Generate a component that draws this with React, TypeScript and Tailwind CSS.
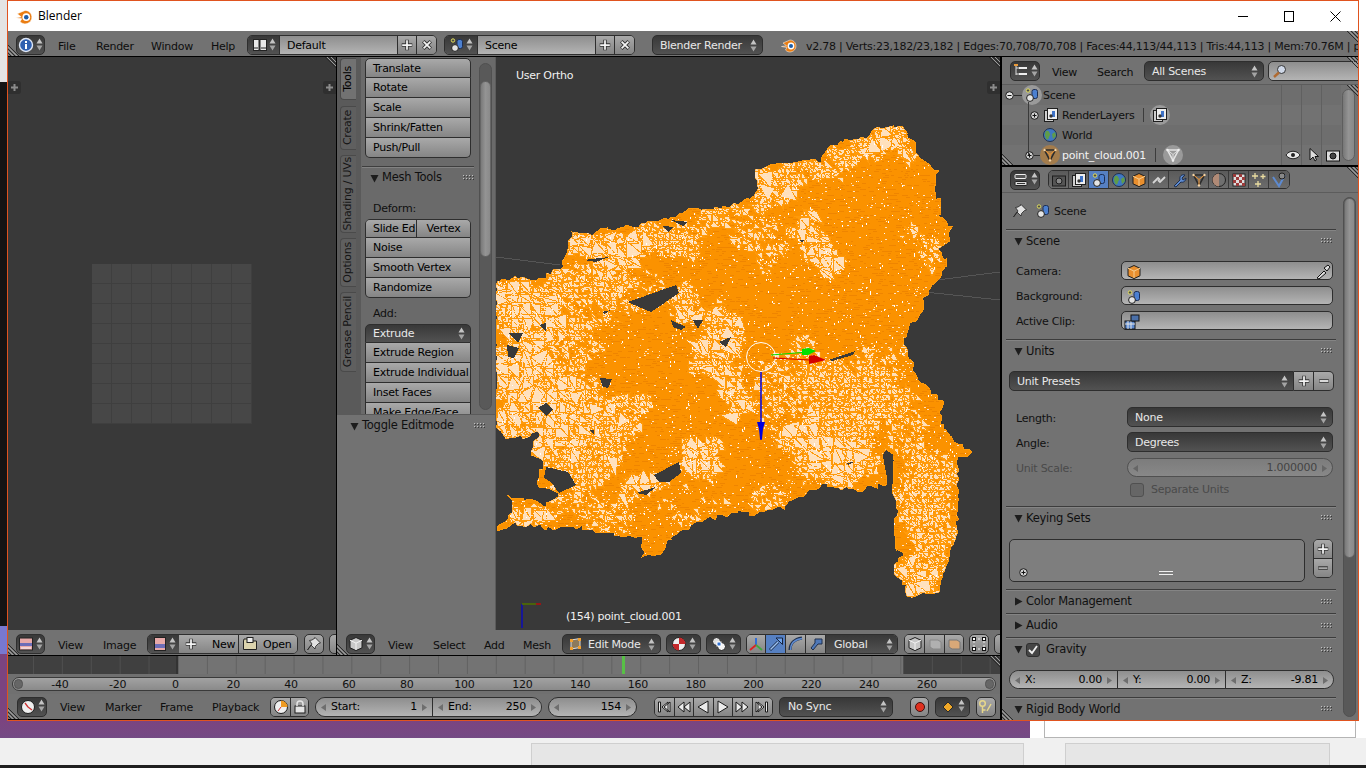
import { useMemo, type ReactNode } from "react";

// shared widget skins
const lightBg = "bg-linear-to-b from-[#a9a9a9] to-[#858585] text-black";
const darkBg = "bg-linear-to-b from-[#383838] to-[#525252] text-[#e8e8e8]";
const darkBtn = `${darkBg} pt-[2px]`;
const fieldBg = "bg-linear-to-b from-[#8e8e8e] to-[#b4b4b4] text-black pt-[2px]";
const edge = "border border-[#2e2e2e]";

type Pt = [number, number];

const OUTLINE: Pt[] = [
  [496, 282], [520, 278], [540, 280], [548, 275], [563, 267], [566, 247], [573, 234], [593, 235], [601, 230], [623, 228],
  [649, 222], [673, 218], [688, 210], [716, 209], [736, 205], [756, 195], [758, 187], [755, 173], [765, 167], [790, 162],
  [820, 160], [825, 150], [847, 140], [868, 137], [870, 130], [883, 127], [903, 128], [915, 143], [918, 158], [937, 172],
  [935, 195], [939, 200], [938, 217], [952, 228], [947, 243], [937, 248], [947, 265], [937, 280], [922, 302], [923, 310],
  [907, 328], [905, 340], [907, 353], [915, 373], [927, 387], [943, 403], [938, 423], [950, 437], [970, 453], [958, 457],
  [957, 470], [958, 483], [957, 510], [958, 532], [948, 557], [940, 590], [923, 592], [910, 598], [903, 583], [892, 570],
  [905, 550], [895, 550], [893, 530], [898, 510], [893, 490], [892, 483], [893, 453], [883, 447], [887, 483], [857, 490],
  [837, 488], [825, 482], [807, 493], [783, 507], [750, 515], [743, 510], [729, 515], [703, 520], [666, 540], [664, 553],
  [643, 555], [643, 538], [609, 533], [576, 527], [546, 528], [519, 523], [496, 530], [503, 522], [513, 513], [508, 497],
  [529, 500], [546, 507], [558, 493], [536, 483], [544, 460], [529, 453], [539, 432], [524, 437], [508, 437], [496, 427],
];

const HOLES: Pt[][] = [
  [[628, 302], [676, 285], [679, 293], [651, 312], [639, 307]],
  [[584, 260], [609, 257], [596, 262]],
  [[671, 220], [688, 222], [683, 226]],
  [[663, 226], [674, 227], [668, 232]],
  [[508, 333], [523, 333], [518, 343]],
  [[507, 345], [519, 348], [514, 358], [508, 357]],
  [[539, 325], [546, 323], [546, 332]],
  [[671, 320], [686, 327], [681, 330], [673, 327]],
  [[693, 320], [703, 320], [698, 329]],
  [[719, 342], [731, 337], [726, 347]],
  [[602, 312], [611, 310], [604, 314]],
  [[538, 408], [546, 403], [553, 410], [546, 416]],
  [[600, 378], [612, 379], [608, 388], [603, 387]],
  [[654, 475], [679, 462], [681, 473], [669, 482], [659, 482]],
  [[636, 493], [656, 487], [646, 495]],
  [[546, 467], [568, 472], [576, 485], [559, 493], [551, 482], [544, 478]],
  [[829, 360], [855, 351], [853, 355], [832, 361]],
  [[590, 430], [594, 430], [594, 435]],
  [[846, 463], [854, 462], [848, 465]],
  [[800, 240], [804, 240], [802, 243]],
];

const LIGHT: [number, number, number, number, number][] = [
  [610, 248, 52, 20, 0.95], [670, 238, 32, 14, 0.8], [712, 222, 30, 12, 0.6], [770, 182, 32, 20, 0.9], [805, 170, 32, 10, 0.75],
  [860, 147, 30, 13, 0.8], [888, 145, 30, 18, 0.9], [815, 250, 18, 33, 0.98], [530, 320, 38, 45, 0.98],
  [530, 395, 40, 55, 0.98], [590, 285, 50, 18, 0.7], [715, 335, 22, 28, 0.95], [690, 300, 14, 24, 0.85],
  [610, 425, 30, 34, 0.9], [565, 425, 30, 50, 0.95], [640, 490, 22, 9, 1], [700, 457, 24, 22, 0.95],
  [730, 385, 15, 42, 0.95], [530, 512, 26, 11, 1], [575, 475, 28, 28, 0.8], [830, 450, 47, 35, 0.98],
  [850, 400, 55, 50, 0.72], [800, 385, 50, 42, 0.52], [925, 500, 32, 55, 0.68], [925, 572, 21, 24, 0.95],
  [915, 440, 22, 34, 0.6], [900, 360, 16, 28, 0.5], [600, 510, 45, 18, 0.55], [925, 240, 12, 24, 0.55],
  [760, 235, 30, 28, 0.5], [560, 300, 48, 24, 0.55], [650, 300, 60, 20, 0.42], [570, 370, 30, 60, 0.6],
  [840, 310, 50, 30, 0.2], [700, 510, 35, 10, 0.45], [780, 490, 30, 18, 0.45],
];

function rng(seed: number) {
  let a = seed;
  return () => {
    a = (a + 0x6d2b79f5) | 0;
    let t = Math.imul(a ^ (a >>> 15), 1 | a);
    t = (t + Math.imul(t ^ (t >>> 7), 61 | t)) ^ t;
    return ((t ^ (t >>> 14)) >>> 0) / 4294967296;
  };
}

function density(x: number, y: number) {
  let d = 0.12;
  // wobble so patches don't read as clean ellipses
  const px = x + 9 * Math.sin(y * 0.09) + 5 * Math.cos(y * 0.21 + x * 0.05);
  const py = y + 9 * Math.sin(x * 0.08) + 5 * Math.cos(x * 0.19 - y * 0.04);
  for (const [cx, cy, rx, ry, w] of LIGHT) {
    const q = ((px - cx) / rx) ** 2 + ((py - cy) / ry) ** 2;
    if (q < 1.5) d = Math.max(d, w * (q < 0.7 ? 1 : (1.5 - q) / 0.8));
  }
  return d;
}

function buildMesh() {
  const r = rng(154);
  const tris = (cell: number, test: (d: number) => boolean) => {
    let out = "";
    for (let x = 496; x < 975; x += cell) {
      for (let y = 125; y < 600; y += cell) {
        const j = () => (r() - 0.5) * cell * 0.7;
        const p: Pt[] = [
          [x + j(), y + j()], [x + cell + j(), y + j()], [x + cell + j(), y + cell + j()], [x + j(), y + cell + j()],
        ];
        for (const t of [[p[0], p[1], p[2]], [p[0], p[2], p[3]]]) {
          const d = density((t[0][0] + t[1][0] + t[2][0]) / 3, (t[0][1] + t[1][1] + t[2][1]) / 3);
          if (test(d)) out += `M${t[0][0].toFixed(0)} ${t[0][1].toFixed(0)}L${t[1][0].toFixed(0)} ${t[1][1].toFixed(0)}L${t[2][0].toFixed(0)} ${t[2][1].toFixed(0)}Z`;
        }
      }
    }
    return out;
  };
  const medium = tris(6, (d) => d > 0.3 + r() * 0.42);
  const coarse = tris(12, (d) => d > 0.82 + r() * 0.18);
  let specks = "";
  let whites = "";
  let dashes = "";
  for (let x = 496; x < 975; x += 2) {
    for (let y = 125; y < 600; y += 2) {
      const d = density(x, y);
      if (r() < d * 0.3) specks += `M${x} ${y}h${1 + Math.floor(r() * 4)}v1h-${1}z`;
      if (r() < 0.02) whites += `M${x} ${y}h1v${1 + Math.floor(r() * 2)}h-1z`;
      if (r() < 0.13) dashes += `M${x} ${y}h${2 + Math.floor(r() * 9)}v1h-${2}z`;
    }
  }
  let edgeLine = "";
  OUTLINE.forEach((p, i) => {
    const q = OUTLINE[(i + 1) % OUTLINE.length];
    const n = Math.max(1, Math.round(Math.hypot(q[0] - p[0], q[1] - p[1]) / 4));
    for (let k = 0; k < n; k++) {
      const f = k / n;
      edgeLine += `${i || k ? "L" : "M"}${(p[0] + (q[0] - p[0]) * f + (r() - 0.5) * 5).toFixed(0)} ${(p[1] + (q[1] - p[1]) * f + (r() - 0.5) * 5).toFixed(0)}`;
    }
  });
  return { coarse, medium, specks, whites, dashes, edgeLine: edgeLine + "Z" };
}

function MeshCanvas() {
  const m = useMemo(buildMesh, []);
  return (
    <svg className="block w-[504px] h-[573px]" viewBox="496 57 504 573" shapeRendering="crispEdges">
      <path d="M496 257L560 265M937 280L1000 272M925 292L1000 300" stroke="#555" fill="none" />
      <clipPath id="cloud"><path d={m.edgeLine} /></clipPath>
      <path d={m.edgeLine} fill="#fb9200" stroke="#ff9a0a" />
      <g clipPath="url(#cloud)">
        <path d={m.dashes} fill="#ef8500" />
        <path d={m.medium} fill="#ffdfb8" stroke="#ff9a0a" />
        <path d={m.coarse} fill="#ffe0bc" stroke="#ff9a0a" />
        <path d={m.specks} fill="#ffe4c4" />
        <path d={m.whites} fill="#ffffff" />
      </g>
      {HOLES.map((h, i) => (
        <polygon key={i} points={h.map((p) => p.join(",")).join(" ")} fill="#393939" />
      ))}
      <g shapeRendering="auto">
        <circle cx="761" cy="357" r="14.5" fill="none" stroke="#fff" />
        <path d="M761 372V440" stroke="#0000e0" strokeWidth="1.5" />
        <path d="M757 422h8l-2 7-1 10h-2l-1-10z" fill="#0000e0" />
        <path d="M771 355L808 352" stroke="#00e000" strokeWidth="1" />
        <path d="M802 349l7-1 7 3-8 4h-6z" fill="#00e000" />
        <path d="M773 358L810 360" stroke="#d40000" strokeWidth="1" />
        <path d="M809 356l5-1 12 5-12 3-5 1z" fill="#d40000" />
        <path d="M522 628V604" stroke="#0000d8" strokeWidth="1.2" />
        <path d="M522 604H541" stroke="#d40000" strokeWidth="1.2" />
        <path d="M522 604H536" stroke="#00b000" strokeWidth="1" />
      </g>
    </svg>
  );
}

function Svg({ children, size = 16, className = "" }: { children: ReactNode; size?: number; className?: string }) {
  return (
    <svg width={size} height={size} viewBox="0 0 16 16" className={`block shrink-0 ${className}`}>
      {children}
    </svg>
  );
}

const Arrows = ({ dim }: { dim?: boolean }) => (
  <svg width="7" height="13" viewBox="0 0 7 13" className="block shrink-0 -mt-[2px]">
    <path d="M3.5 0.5L6.5 5.5H0.5z" fill={dim ? "#5a5a5a" : "#c4c4c4"} />
    <path d="M3.5 12.5L6.5 7.5H0.5z" fill={dim ? "#5a5a5a" : "#a4a4a4"} />
  </svg>
);

// the small nudge triangles at both ends of a number field
const Nudge = ({ dim }: { dim?: boolean }) => (
  <>
    <svg width="5" height="7" viewBox="0 0 5 7" className="absolute left-[5px] top-[6px]">
      <path d="M5 0V7L0 3.500z" fill={dim ? "#666" : "#6e6e6e"} />
    </svg>
    <svg width="5" height="7" viewBox="0 0 5 7" className="absolute right-[5px] top-[6px]">
      <path d="M0 0V7L5 3.500z" fill={dim ? "#666" : "#6e6e6e"} />
    </svg>
  </>
);

const BlenderLogo = ({ size = 16 }: { size?: number }) => (
  <Svg size={size}>
    <path d="M0.500 9.500L5.500 8.800L2 6L9 3A6 6 0 1 1 4.500 13L6 10.500z" fill="#ea7d12" stroke="#fff" strokeWidth="0.5" />
    <circle cx="10" cy="9" r="3.400" fill="#fff" />
    <circle cx="10" cy="9" r="2" fill="#1d5da8" />
  </Svg>
);

const InfoIcon = () => (
  <Svg>
    <circle cx="8" cy="8" r="6.500" fill="#2e5fb0" stroke="#dfe7f5" strokeWidth="1.400" />
    <rect x="7" y="7" width="2" height="5" fill="#fff" />
    <rect x="7" y="4" width="2" height="2" fill="#fff" />
  </Svg>
);

const LayoutIcon = () => (
  <Svg>
    <rect x="1.500" y="2.500" width="5.500" height="11" fill="#e8e8e8" stroke="#222" />
    <rect x="8" y="2.500" width="6.500" height="11" fill="#e8e8e8" stroke="#222" />
    <path d="M2 11h4M9 11h5" stroke="#222" />
  </Svg>
);

const SceneIcon = () => (
  <Svg>
    <rect x="8" y="2.500" width="5.500" height="9" rx="2" fill="#4c80d0" stroke="#1d2f55" />
    <circle cx="6" cy="11" r="3.400" fill="#e4e4e4" stroke="#1f1f1f" />
    <circle cx="4" cy="3.500" r="1.700" fill="#4a4a4a" stroke="#e3e05c" />
  </Svg>
);

const CrossIcon = ({ rotate, minus, dim }: { rotate?: boolean; minus?: boolean; dim?: boolean }) => (
  <Svg size={14} className={rotate ? "rotate-45" : ""}>
    {minus ? (
      <>
        <path d="M2.500 8H13.500" stroke="#333" strokeWidth="4" />
        <path d="M3 8H13" stroke={dim ? "#a9a9a9" : "#f2f2f2"} strokeWidth="2" />
      </>
    ) : (
      <>
        <path d="M8 2V14M2 8H14" stroke="#333" strokeWidth="4" />
        <path d="M8 2.500V13.500M2.500 8H13.500" stroke="#f4f4f4" strokeWidth="2" />
      </>
    )}
  </Svg>
);

const PinIcon = () => (
  <Svg>
    <path d="M9 1.500l5.500 5.500-2 .5-3 3-.5 2.500L5 9l-3.500 5L6 8 3.500 4.500 6 4l3-2z" fill="#e2e2e2" stroke="#222" strokeWidth="0.8" />
  </Svg>
);

const OutlinerIcon = () => (
  <Svg>
    <path d="M3 2v10M3 5h3M3 11h3" stroke="#ddd" />
    <rect x="1" y="1" width="4" height="2" fill="#e89a3a" />
    <rect x="6" y="4" width="8" height="2" fill="#eee" />
    <rect x="6" y="10" width="8" height="2" fill="#eee" />
  </Svg>
);

const PropsIcon = () => (
  <Svg>
    <rect x="2" y="2.500" width="11" height="4" rx="1" fill="#555" stroke="#eee" />
    <rect x="2" y="9.500" width="12" height="4" rx="1" fill="#ddd" stroke="#222" />
    <path d="M4 11.500h8" stroke="#333" />
  </Svg>
);

const CubeIcon = ({ orange }: { orange?: boolean }) => (
  <Svg>
    <path d="M8 1.500l6 2.800v7.500l-6 2.800-6-2.800V4.300z" fill={orange ? "#e98f2e" : "#c8c8c8"} stroke="#1f1f1f" />
    <path d="M2 4.300l6 2.800 6-2.800M8 7v7" stroke={orange ? "#f7cd8e" : "#f2f2f2"} fill="none" />
  </Svg>
);

const TriMeshIcon = ({ dim }: { dim?: boolean }) => (
  <Svg>
    <path d="M2.500 3H13.500L8 13.500z" fill="none" stroke={dim ? "#e4e4e4" : "#2b2b2b"} strokeWidth="1.600" />
    <path d="M2.500 3L8 7.500 13.500 3M8 7.500V13.500" stroke={dim ? "#dedede" : "#f09532"} fill="none" />
    <g fill={dim ? "#f0f0f0" : "#f6d6a8"}>
      <circle cx="2.500" cy="3" r="1.200" />
      <circle cx="13.500" cy="3" r="1.200" />
      <circle cx="8" cy="13.500" r="1.200" />
    </g>
  </Svg>
);

const ExpandDot = ({ minus }: { minus?: boolean }) => (
  <svg width="9" height="9" viewBox="0 0 9 9" className="block shrink-0">
    <circle cx="4.500" cy="4.500" r="3.800" fill={minus ? "#e4e4e4" : "#d0d0d0"} stroke="#1c1c1c" />
    <path d={minus ? "M2.500 4.500h4" : "M2.500 4.500h4M4.500 2.500v4"} stroke="#111" />
  </svg>
);

const RenderLayersIcon = () => (
  <Svg>
    <rect x="1.500" y="3.500" width="9" height="11" fill="#cfcfcf" stroke="#1f1f1f" />
    <rect x="4.500" y="1.500" width="10" height="11" fill="#eeeeee" stroke="#1f1f1f" />
    <rect x="9" y="4" width="3" height="6" fill="#3e73c8" />
    <circle cx="8" cy="9" r="1.700" fill="#333" />
  </Svg>
);

const WorldIcon = () => (
  <Svg>
    <circle cx="8" cy="8" r="6.500" fill="#3f78c2" stroke="#20314f" />
    <path d="M4 4c3-1 3 1 4 3s-2 2-1 4l-2 2c-2-3-3-6-1-9zM10 7l3-2 1 4-3 3z" fill="#5f9c4a" />
  </Svg>
);

const HalfCircleBadge = ({ children }: { children: ReactNode }) => (
  <span className="flex items-center justify-center w-[20px] h-[20px] rounded-full bg-[#9a9a9a] shrink-0">{children}</span>
);

const Diagonal = ({ flip }: { flip?: boolean }) => (
  <svg width="13" height="13" viewBox="0 0 13 13" className={`absolute ${flip ? "right-0 top-0" : "left-0 bottom-0"}`}>
    <path d={flip ? "M2 0L13 11M6 0L13 7M10 0L13 3" : "M0 2L11 13M0 6L7 13M0 10L3 13"} stroke="#2a2a2a" fill="none" />
    <path d={flip ? "M4 0L13 9M8 0L13 5" : "M0 4L9 13M0 8L5 13"} stroke="#9c9c9c" fill="none" />
  </svg>
);

const Grip = () => (
  <svg width="11" height="6" viewBox="0 0 11 6" className="block shrink-0">
    <g fill="#c2c2c2">
      {[0, 3, 6, 9].map((x) => (
        <g key={x}>
          <rect x={x} y="0" width="1" height="1" />
          <rect x={x} y="3" width="1" height="1" />
        </g>
      ))}
    </g>
    <g fill="#393939">
      {[1, 4, 7, 10].map((x) => (
        <g key={x}>
          <rect x={x} y="1" width="1" height="1" />
          <rect x={x} y="4" width="1" height="1" />
        </g>
      ))}
    </g>
  </svg>
);

const Tri = ({ open = true }: { open?: boolean }) => (
  <svg width="9" height="9" viewBox="0 0 9 9" className="block shrink-0">
    <path d={open ? "M0.500 1H8.500L4.500 8.500z" : "M1 0.500V8.500L8.500 4.500z"} fill="#1d1d1d" />
  </svg>
);

function PanelHead({ label, open = true, h = "h-[22px]", children }: { label: string; open?: boolean; h?: string; children?: ReactNode }) {
  return (
    <div className={`${h} flex items-center pl-[12px] pr-[8px] text-[11.5px] text-[#101010]`}>
      <Tri open={open} />
      <span className="ml-[3px] flex items-center gap-[6px] pt-[1px]">
        {children}
        {label}
      </span>
      <span className="ml-auto">
        <Grip />
      </span>
    </div>
  );
}

const Rule = () => <div className="mx-[4px] h-[1px] bg-[#3c3c3c] shadow-[0_1px_0_#848484]" />;

function Dropdown({ icon, w, h = "h-[20px]" }: { icon: ReactNode; w: string; h?: string }) {
  return (
    <div className={`${w} ${h} ${edge} ${darkBg} rounded-[5px] flex items-center justify-center gap-[2px] shrink-0`}>
      {icon}
      <Arrows />
    </div>
  );
}

function Cell({ label, w }: { label: string; w: string }) {
  return <span className={`${w} shrink-0 pt-[4px] text-[11px] text-[#0d0d0d]`}>{label}</span>;
}

function IconBtn({ children, className = "" }: { children: ReactNode; className?: string }) {
  return <div className={`flex items-center justify-center ${lightBg} ${className}`}>{children}</div>;
}

function ToolRow({ label, first, last }: { label: string; first?: boolean; last?: boolean }) {
  return (
    <div
      className={`h-[20px] flex items-center pl-[7px] pt-[2px] text-[11px] border-x border-b border-[#2e2e2e] ${lightBg} ${first ? "border-t rounded-t-[5px] h-[19px]" : ""} ${last ? "rounded-b-[5px]" : ""}`}
    >
      {label}
    </div>
  );
}

function VTab({ label, h, active, mt }: { label: string; h: string; active?: boolean; mt: string }) {
  return (
    <div className={`${h} ${mt} ml-[3px] w-[16px] rounded-l-[4px] border-l border-y border-[#4a4a4a] flex items-center justify-center ${active ? "bg-[#727272]" : "bg-[#5f5f5f]"}`}>
      <span className={`[writing-mode:vertical-rl] rotate-180 text-[11px] ${active ? "text-black" : "text-[#151515]"}`}>{label}</span>
    </div>
  );
}

function ToolShelf() {
  return (
    <div className="w-[159px] shrink-0 flex flex-col bg-[#6a6a6a] border-r border-[#5c5c5c]">
      <div className="h-[357px] flex overflow-hidden">
        <div className="w-[24px] shrink-0 pt-[1px] bg-[#5a5a5a]">
          <VTab label="Tools" h="h-[42px]" mt="" active />
          <VTab label="Create" h="h-[44px]" mt="mt-[6px]" />
          <VTab label="Shading / UVs" h="h-[78px]" mt="mt-[5px]" />
          <VTab label="Options" h="h-[49px]" mt="mt-[5px]" />
          <VTab label="Grease Pencil" h="h-[80px]" mt="mt-[5px]" />
        </div>
        <div className="w-[106px] ml-[4px] shrink-0 pt-[1px]">
          <ToolRow label="Translate" first />
          <ToolRow label="Rotate" />
          <ToolRow label="Scale" />
          <ToolRow label="Shrink/Fatten" />
          <ToolRow label="Push/Pull" last />
          <div className="mt-[8px] -mx-[3px] h-[1px] bg-[#3e3e3e] shadow-[0_1px_0_#828282]" />
          <div className="h-[22px] flex items-center pl-[5px] text-[11.5px] text-[#101010]">
            <Tri />
            <span className="ml-[3px]">Mesh Tools</span>
            <span className="ml-auto -mr-[3px]">
              <Grip />
            </span>
          </div>
          <div className="mt-[10px] h-[20px] flex items-center pl-[8px] text-[11px] text-[#101010]">Deform:</div>
          <div className="h-[19px] flex text-[11px] border border-[#2e2e2e] rounded-t-[5px] overflow-hidden">
            <div className={`w-[51px] flex items-center pl-[7px] pt-[2px] border-r border-[#2e2e2e] ${lightBg}`}>Slide Ed</div>
            <div className={`flex-1 flex items-center justify-center pt-[2px] ${lightBg}`}>Vertex</div>
          </div>
          <ToolRow label="Noise" />
          <ToolRow label="Smooth Vertex" />
          <ToolRow label="Randomize" last />
          <div className="mt-[6px] h-[20px] flex items-center pl-[8px] text-[11px] text-[#101010]">Add:</div>
          <div className={`h-[19px] flex items-center pl-[7px] pr-[5px] text-[11px] border border-[#2e2e2e] rounded-t-[5px] ${darkBtn}`}>
            Extrude
            <span className="ml-auto">
              <Arrows />
            </span>
          </div>
          <ToolRow label="Extrude Region" />
          <ToolRow label="Extrude Individual" />
          <ToolRow label="Inset Faces" />
          <ToolRow label="Make Edge/Face" />
        </div>
        <div className="ml-[8px] mt-[6px] mb-[4px] w-[13px] rounded-full bg-[#595959] border border-[#505050] overflow-hidden shrink-0">
          <div className="mt-[17px] h-[176px] rounded-full bg-linear-to-r from-[#7a7a7a] via-[#949494] to-[#8a8a8a] border border-[#666]" />
        </div>
      </div>
      <div className="flex-1 bg-[#727272] border-t border-[#5a5a5a]">
        <div className="h-[22px] flex items-center pl-[13px] pr-[10px] text-[11.5px] text-[#101010]">
          <Tri />
          <span className="ml-[3px]">Toggle Editmode</span>
          <span className="ml-auto">
            <Grip />
          </span>
        </div>
      </div>
    </div>
  );
}

function CornerPlus({ right }: { right?: boolean }) {
  return (
    <div className={`absolute top-[24px] ${right ? "right-0 rounded-l-[3px]" : "left-0 rounded-r-[3px]"} w-[13px] h-[13px] bg-[#2f2f2f] flex items-center justify-center`}>
      <svg width="9" height="9" viewBox="0 0 9 9"><path d="M4.500 1V8M1 4.500H8" stroke="#8c8c8c" strokeWidth="2" /></svg>
    </div>
  );
}

function ImageEditor() {
  const cells = Array.from({ length: 64 });
  return (
    <div className="w-[328px] shrink-0 flex flex-col">
      <div className="relative h-[573px] bg-[#393939] flex items-center justify-center">
        <div className="grid grid-cols-[repeat(8,20px)] grid-rows-[repeat(8,20px)] mt-[1px]">
          {cells.map((_, i) => (
            <div key={i} className="bg-[#474747] border-r border-b border-[#3f3f3f]" />
          ))}
        </div>
        <CornerPlus />
        <CornerPlus right />
        <Diagonal flip />
      </div>
      <div className="relative h-[25px] bg-[#727272] flex items-center pl-[8px] pt-[3px] overflow-hidden">
        <Dropdown w="w-[29px]" icon={<Svg><rect x="1.500" y="2" width="13" height="12" fill="#e8a9a9" stroke="#222" /><rect x="2" y="7" width="12" height="3" fill="#6d6db8" /><path d="M3 12h10" stroke="#fff" /></Svg>} />
        <div className="ml-[13px] flex items-center">
          <Cell label="View" w="w-[45px]" />
          <Cell label="Image" w="w-[44px]" />
        </div>
        <div className={`h-[20px] w-[151px] ${edge} rounded-[5px] flex overflow-hidden shrink-0`}>
          <div className={`w-[31px] ${darkBg} flex items-center justify-center gap-[1px]`}>
            <Svg><rect x="2.500" y="1.500" width="11" height="13" fill="#e8a9a9" stroke="#222" /><rect x="3" y="8" width="10" height="4" fill="#6d6db8" /></Svg>
            <Arrows />
          </div>
          <div className={`w-[60px] ${lightBg} border-r border-[#2e2e2e] flex items-center text-[11px]`}>
            <span className="ml-[5px]"><CrossIcon /></span>
            <span className="ml-[14px] pt-[2px]">New</span>
          </div>
          <div className={`flex-1 ${lightBg} flex items-center text-[11px]`}>
            <Svg className="ml-[3px]"><path d="M1.500 5V13.500H14.500V5H7L6 3H2z" fill="#dcd4ae" stroke="#222" /><rect x="5" y="1.500" width="6" height="5" fill="#eee" stroke="#222" /></Svg>
            <span className="ml-[5px] pt-[2px]">Open</span>
          </div>
        </div>
        <IconBtn className={`ml-[6px] w-[20px] h-[20px] rounded-[5px] ${edge} shrink-0`}><PinIcon /></IconBtn>
        <div className={`ml-[5px] w-[20px] h-[20px] rounded-[5px] ${edge} ${lightBg} shrink-0`} />
        <Diagonal />
      </div>
    </div>
  );
}

function ViewHeader() {
  return (
    <div className="relative h-[25px] bg-[#727272] flex items-center pl-[9px] pt-[3px] overflow-hidden">
      <Dropdown w="w-[29px]" icon={<CubeIcon />} />
      <div className="ml-[13px] flex items-center">
        <Cell label="View" w="w-[45px]" />
        <Cell label="Select" w="w-[51px]" />
        <Cell label="Add" w="w-[39px]" />
        <Cell label="Mesh" w="w-[39px]" />
      </div>
      <div className={`w-[99px] h-[20px] ${edge} ${darkBtn} rounded-[5px] flex items-center pl-[5px] pr-[5px] text-[11px] shrink-0`}>
        <Svg className="-mt-[2px]"><path d="M3 4l9-1.500v9L3 13z" fill="#8c7a5c" stroke="#ddd" /><g fill="#f0a030"><rect x="2" y="3" width="3" height="3" /><rect x="10" y="2" width="3" height="3" /><rect x="2" y="11" width="3" height="3" /><rect x="10" y="10" width="3" height="3" /></g></Svg>
        <span className="ml-[4px]">Edit Mode</span>
        <span className="ml-auto"><Arrows /></span>
      </div>
      <div className="ml-[5px]">
        <Dropdown w="w-[35px]" icon={<Svg><circle cx="8" cy="8" r="6.500" fill="#eee" stroke="#222" /><path d="M8 1.500a6.500 6.500 0 0 1 6.500 6.500H8V14.500A6.500 6.500 0 0 1 1.500 8H8z" fill="#c4282a" /></Svg>} />
      </div>
      <div className="ml-[5px]">
        <Dropdown w="w-[35px]" icon={<Svg><circle cx="5.500" cy="5.500" r="4" fill="#e0e0e0" stroke="#222" /><circle cx="10.500" cy="10.500" r="4" fill="#f4f4f4" stroke="#222" /><rect x="6" y="6" width="4" height="4" fill="#2e6fd0" stroke="#fff" /></Svg>} />
      </div>
      <div className={`ml-[5px] w-[152px] h-[20px] ${edge} rounded-[5px] flex overflow-hidden shrink-0`}>
        <IconBtn className="w-[19px] border-r border-[#2e2e2e]">
          <Svg><path d="M8 9V2" stroke="#2468e0" strokeWidth="1.800" /><path d="M8 9L2 14" stroke="#d22" strokeWidth="1.800" /><path d="M8 9L14 14" stroke="#3fa83f" strokeWidth="1.800" /></Svg>
        </IconBtn>
        <div className="w-[20px] bg-[#5680c2] border-r border-[#2e2e2e] flex items-center justify-center">
          <Svg><path d="M2 14L10 6" stroke="#1e2e4c" strokeWidth="3" /><path d="M8 2h6.500v6.500L12 6z" fill="#6fa4ec" stroke="#16233d" /><path d="M2.500 13.500L10 6" stroke="#9cc2f2" strokeWidth="1.400" /></Svg>
        </div>
        <IconBtn className="w-[20px] border-r border-[#2e2e2e] from-[#7d7d7d] to-[#6b6b6b]">
          <Svg><path d="M2 14C2 8 6 3 14 2" fill="none" stroke="#20304c" strokeWidth="3" /><path d="M2.500 14C2.500 8 6.500 3.500 14 2.500" fill="none" stroke="#5d8ad0" strokeWidth="1.400" /></Svg>
        </IconBtn>
        <IconBtn className="w-[20px] border-r border-[#2e2e2e] from-[#7d7d7d] to-[#6b6b6b]">
          <Svg><path d="M7 3h7v5H10l-5 6-2-2 4-5z" fill="#4f78b8" stroke="#1f2f4d" /></Svg>
        </IconBtn>
        <div className={`flex-1 ${darkBtn} flex items-center pl-[8px] pr-[4px] text-[11px]`}>
          Global
          <span className="ml-auto"><Arrows /></span>
        </div>
      </div>
      <div className={`ml-[6px] w-[60px] h-[20px] ${edge} rounded-[5px] flex overflow-hidden shrink-0`}>
        <IconBtn className="w-[20px] border-r border-[#2e2e2e] from-[#7a7a7a] to-[#6a6a6a]"><CubeIcon /></IconBtn>
        <IconBtn className="w-[20px] border-r border-[#2e2e2e]"><Svg><path d="M3 4h8l3 2v7H6l-3-2z" fill="#b0b0b0" stroke="#888" /></Svg></IconBtn>
        <IconBtn className="flex-1"><Svg><path d="M3 4h8l3 2v7H6l-3-2z" fill="#d8a878" stroke="#777" /></Svg></IconBtn>
      </div>
      <IconBtn className={`ml-[5px] w-[20px] h-[20px] rounded-[5px] ${edge} shrink-0 from-[#7a7a7a] to-[#6a6a6a]`}>
        <Svg><path d="M3 3h10v10H3z" fill="none" stroke="#eee" strokeDasharray="2 2" /><g fill="#fff" stroke="#111"><rect x="1.500" y="1.500" width="3" height="3" /><rect x="11.500" y="1.500" width="3" height="3" /><rect x="1.500" y="11.500" width="3" height="3" /><rect x="11.500" y="11.500" width="3" height="3" /></g></Svg>
      </IconBtn>
      <div className={`ml-[5px] w-[20px] h-[20px] rounded-[5px] ${edge} ${lightBg} shrink-0`} />
      <Diagonal />
    </div>
  );
}

function Viewport3D() {
  return (
    <div className="flex-1 flex flex-col min-w-0">
      <div className="h-[573px] flex">
        <ToolShelf />
        <div className="relative flex-1 bg-[#393939] overflow-hidden">
          <MeshCanvas />
          <span className="absolute left-[20px] top-[11px] text-[11px] text-[#f0f0f0]">User Ortho</span>
          <span className="absolute left-[70px] top-[552px] text-[11px] text-[#f0f0f0]">(154) point_cloud.001</span>
          <CornerPlus right />
          <Diagonal flip />
        </div>
      </div>
      <ViewHeader />
    </div>
  );
}

function PlayBtn({ d, last }: { d: string; last?: boolean }) {
  return (
    <IconBtn className={`w-[20px] ${last ? "" : "border-r border-[#2e2e2e]"}`}>
      <Svg><path d={d} fill="#ececec" stroke="#1b1b1b" /></Svg>
    </IconBtn>
  );
}

function Timeline() {
  const labels = ["-40", "-20", "0", "20", "40", "60", "80", "100", "120", "140", "160", "180", "200", "220", "240", "260"];
  return (
    <div className="h-[64px] border-t border-black flex flex-col">
      <div className="h-[18px] flex">
        <div className="w-[170px] bg-[#404040] border-r-2 border-[#333] bg-[linear-gradient(90deg,#4f4f4f_1px,transparent_1px)] bg-[size:28.9px_100%] bg-[position:25px_0]" />
        <div className="w-[725px] relative bg-[#737373] bg-[linear-gradient(90deg,#616161_1px,transparent_1px)] bg-[size:28.9px_100%]">
          <div className="absolute left-[444px] top-0 bottom-0 w-[3px] bg-[#58c046]" />
        </div>
        <div className="relative flex-1 bg-[#404040] bg-[linear-gradient(90deg,#4f4f4f_1px,transparent_1px)] bg-[size:28.9px_100%]">
          <Diagonal flip />
        </div>
      </div>
      <div className="h-[20px] bg-[#707070] px-[4px] flex items-center">
        <div className="relative w-[984px] h-[14px] rounded-full border border-[#3a3a3a] bg-linear-to-b from-[#a2a2a2] to-[#8a8a8a] flex items-center pl-[18px] pt-[2px] text-[11px] overflow-hidden text-[#111]">
          {labels.map((l) => (
            <span key={l} className="w-[57.8px] shrink-0 text-center">{l}</span>
          ))}
          <span className="absolute left-[1px] top-[1px] w-[9px] h-[10px] rounded-full bg-[#666] border border-[#555]" />
          <span className="absolute right-[1px] top-[1px] w-[9px] h-[10px] rounded-full bg-[#666] border border-[#555]" />
        </div>
      </div>
      <div className="relative flex-1 bg-[#727272] flex items-center pl-[9px] overflow-hidden">
        <Dropdown w="w-[30px]" icon={<Svg><circle cx="8" cy="8" r="6.500" fill="#efefef" stroke="#1c1c1c" /><path d="M8 8L5 4M8 8L12 11" stroke="#c33" strokeWidth="1.300" /></Svg>} />
        <div className="ml-[13px] flex items-center">
          <Cell label="View" w="w-[45px]" />
          <Cell label="Marker" w="w-[55px]" />
          <Cell label="Frame" w="w-[52px]" />
          <Cell label="Playback" w="w-[58px]" />
        </div>
        <div className={`w-[39px] h-[20px] ${edge} rounded-[5px] flex overflow-hidden shrink-0`}>
          <IconBtn className="w-[20px] border-r border-[#2e2e2e]"><Svg><circle cx="8" cy="8" r="6.500" fill="#efefef" stroke="#1c1c1c" /><path d="M8 8V1.500A6.500 6.500 0 0 1 14.500 8z" fill="#ef9a22" /><path d="M8 8L5 12" stroke="#c33" /></Svg></IconBtn>
          <IconBtn className="flex-1"><Svg><rect x="3" y="7" width="10" height="7" fill="#e4e4e4" stroke="#1c1c1c" /><path d="M5 7V5a3 3 0 0 1 6 0v2" fill="none" stroke="#e4e4e4" strokeWidth="1.500" /></Svg></IconBtn>
        </div>
        <div className={`ml-[6px] w-[227px] h-[20px] ${edge} rounded-full flex overflow-hidden text-[11px] shrink-0`}>
          <div className={`relative w-[117px] ${fieldBg} border-r border-[#2e2e2e] flex items-center pl-[15px] pr-[15px]`}>
            Start:<span className="ml-auto">1</span>
            <Nudge />
          </div>
          <div className={`relative flex-1 ${fieldBg} flex items-center pl-[15px] pr-[15px]`}>
            End:<span className="ml-auto">250</span>
            <Nudge />
          </div>
        </div>
        <div className={`relative ml-[6px] w-[89px] h-[20px] ${edge} rounded-full ${fieldBg} flex items-center justify-end pr-[15px] text-[11px] shrink-0`}>
          154
          <Nudge />
        </div>
        <div className={`ml-[17px] w-[119px] h-[20px] ${edge} rounded-[5px] flex overflow-hidden shrink-0`}>
          <PlayBtn d="M2.500 3v10h2V3zM12 3L6 8l6 5zM14 3L8 8l6 5z" />
          <PlayBtn d="M8 3L2 8l6 5zM14 3L8 8l6 5z" />
          <PlayBtn d="M13 2L3 8l10 6z" />
          <PlayBtn d="M3 2l10 6L3 14z" />
          <PlayBtn d="M8 3l6 5-6 5zM2 3l6 5-6 5z" />
          <PlayBtn d="M13.500 3v10h-2V3zM4 3l6 5-6 5zM2 3l6 5-6 5z" last />
        </div>
        <div className={`ml-[6px] w-[114px] h-[20px] ${edge} ${darkBtn} rounded-[5px] flex items-center pl-[8px] pr-[5px] text-[11px] shrink-0`}>
          No Sync
          <span className="ml-auto"><Arrows /></span>
        </div>
        <IconBtn className={`ml-[17px] w-[19px] h-[20px] ${edge} rounded-[5px] shrink-0`}>
          <Svg><circle cx="8" cy="8" r="4.500" fill="#e0301e" stroke="#401010" /></Svg>
        </IconBtn>
        <div className="ml-[6px]">
          <Dropdown w="w-[35px]" icon={<Svg><path d="M8 3l5 5-5 5-5-5z" fill="#f0a828" stroke="#2a2a2a" /></Svg>} />
        </div>
        <IconBtn className={`ml-[6px] w-[20px] h-[20px] ${edge} rounded-[5px] shrink-0`}>
          <Svg><circle cx="4.500" cy="4.500" r="2.800" fill="none" stroke="#e7d78a" strokeWidth="1.500" /><path d="M4.500 7v7M4.500 11h3M9 12l4-7" stroke="#e7d78a" strokeWidth="1.500" /></Svg>
        </IconBtn>
        <Diagonal />
      </div>
    </div>
  );
}

function TreeRow({ band, indent, children, cols }: { band: string; indent: string; children: ReactNode; cols?: boolean }) {
  return (
    <div className={`h-[20px] flex items-center ${band} ${indent} text-[11px] text-[#101010] shrink-0`}>
      {children}
      {cols && (
        <div className="ml-auto flex">
          <Svg className="mr-[4px]"><path d="M1 8c3-5 11-5 14 0-3 5-11 5-14 0z" fill="#e8e8e8" stroke="#222" /><circle cx="8" cy="8" r="2" fill="#222" /></Svg>
          <Svg className="mr-[4px]"><path d="M5 1.500V13l3-3 2 4 1.500-1L10 9.500h3.500z" fill="#ddd" stroke="#111" /></Svg>
          <Svg><rect x="1.500" y="4" width="13" height="10" fill="#ddd" stroke="#111" /><circle cx="8" cy="9" r="3" fill="#444" stroke="#111" /></Svg>
        </div>
      )}
    </div>
  );
}

function Outliner() {
  return (
    <div className="h-[108px] flex flex-col">
      <div className="relative h-[28px] bg-[#727272] flex items-start pl-[8px] pt-[4px] border-b border-[#5c5c5c] overflow-hidden shrink-0">
        <Dropdown w="w-[30px]" icon={<OutlinerIcon />} />
        <div className="ml-[12px] flex items-start">
          <Cell label="View" w="w-[45px]" />
          <Cell label="Search" w="w-[47px]" />
        </div>
        <div className={`w-[120px] h-[20px] ${edge} ${darkBtn} rounded-[5px] flex items-center pl-[7px] pr-[5px] text-[11px] shrink-0`}>
          All Scenes
          <span className="ml-auto"><Arrows /></span>
        </div>
        <div className={`ml-[4px] w-[100px] h-[20px] ${edge} ${fieldBg} rounded-l-[5px] flex items-center pl-[3px] shrink-0`}>
          <Svg className="-mt-[2px]"><circle cx="9.500" cy="6.500" r="4" fill="#cfd8e8" stroke="#333" /><path d="M7 9.500L2 14" stroke="#b06a30" strokeWidth="2.400" /></Svg>
        </div>
        <Diagonal flip />
      </div>
      <div className="flex flex-1 min-h-0">
        <div className="relative w-[339px] shrink-0 overflow-hidden">
          <TreeRow band="bg-[#6e6e6e]" indent="pl-[3px]">
            <ExpandDot minus />
            <span className="w-[8px] h-[1px] bg-[#2c2c2c]" />
            <HalfCircleBadge><SceneIcon /></HalfCircleBadge>
            <span className="ml-[1px] pt-[2px]">Scene</span>
          </TreeRow>
          <TreeRow band="bg-[#727272]" indent="pl-[28px]">
            <ExpandDot />
            <span className="ml-[4px]"><RenderLayersIcon /></span>
            <span className="ml-[3px] pt-[2px]">RenderLayers</span>
            <span className="ml-[8px] w-[1px] h-[14px] bg-[#3c3c3c]" />
            <span className="ml-[6px]"><HalfCircleBadge><RenderLayersIcon /></HalfCircleBadge></span>
          </TreeRow>
          <TreeRow band="bg-[#6e6e6e]" indent="pl-[40px]">
            <WorldIcon />
            <span className="ml-[4px] pt-[2px]">World</span>
          </TreeRow>
          <TreeRow band="bg-[#727272]" indent="pl-[23px]" cols>
            <ExpandDot />
            <span className="w-[6px] h-[1px] bg-[#2c2c2c]" />
            <span className="flex items-center justify-center w-[20px] h-[20px] rounded-full bg-[#a37c4c]"><TriMeshIcon /></span>
            <span className="ml-[2px] pt-[2px] text-[#f2f2f2]">point_cloud.001</span>
            <span className="ml-[9px] w-[1px] h-[14px] bg-[#3c3c3c]" />
            <span className="ml-[7px]"><HalfCircleBadge><TriMeshIcon dim /></HalfCircleBadge></span>
          </TreeRow>
          <div className="absolute left-[26px] top-[17px] h-[53px] w-[1px] bg-[#3a3a3a]" />
          <div className="absolute left-[279px] top-0 bottom-0 w-[1px] bg-[#606060]" />
          <div className="absolute left-[299px] top-0 bottom-0 w-[1px] bg-[#606060]" />
          <div className="absolute left-[319px] top-0 bottom-0 w-[1px] bg-[#606060]" />
          <Diagonal />
        </div>
        <div className="flex-1 bg-[#727272] pl-[1px] pt-[4px] pb-[4px] relative">
          <div className="w-[13px] h-full rounded-full bg-linear-to-r from-[#777] via-[#949494] to-[#888] border border-[#5e5e5e]" />
          <Diagonal flip />
        </div>
      </div>
    </div>
  );
}

function PropLabelRow({ label, children, w = "w-[105px]", mt, dim }: { label: string; children: ReactNode; w?: string; mt: string; dim?: boolean }) {
  return (
    <div className={`flex items-center ${mt} pl-[14px] pr-[7px]`}>
      <span className={`${w} shrink-0 pt-[3px] leading-[14px] text-[11px] ${dim ? "text-[#4a4a4a]" : "text-[#111]"}`}>{label}</span>
      {children}
    </div>
  );
}

function Vec({ axis, value, last }: { axis: string; value: string; last?: boolean }) {
  return (
    <div className={`relative flex-1 ${fieldBg} ${last ? "" : "border-r border-[#2e2e2e]"} flex items-center pl-[15px] pr-[15px] text-[11px]`}>
      {axis}
      <span className="ml-auto">{value}</span>
      <Nudge />
    </div>
  );
}

function Properties() {
  const tabs: ReactNode[] = [
    <Svg key="0"><rect x="1.500" y="4" width="13" height="10" fill="#555" stroke="#1c1c1c" /><circle cx="8" cy="9" r="3" fill="#888" stroke="#1c1c1c" /></Svg>,
    <RenderLayersIcon key="1" />,
    <SceneIcon key="2" />,
    <WorldIcon key="3" />,
    <CubeIcon key="4" orange />,
    <Svg key="5"><path d="M2 11l5-5 2 2M14 5l-5 5-2-2" fill="none" stroke="#d6d6d6" strokeWidth="1.800" /></Svg>,
    <Svg key="6"><path d="M3 14L9 8c-1-4 2-6 5-5l-3 3 1 2 3-2c0 3-3 5-5 4l-5 5z" fill="#5d8ad0" stroke="#1f2f4d" /></Svg>,
    <TriMeshIcon key="7" />,
    <Svg key="8"><circle cx="8" cy="8" r="6.500" fill="#6f6f6f" stroke="#222" /><path d="M8 1.500a6.500 6.500 0 0 0 0 13z" fill="#b08a76" /></Svg>,
    <Svg key="9"><rect x="2" y="2" width="12" height="12" fill="#ddd" stroke="#222" /><g fill="#9c3b3b"><rect x="2" y="2" width="3" height="3" /><rect x="8" y="2" width="3" height="3" /><rect x="5" y="5" width="3" height="3" /><rect x="11" y="5" width="3" height="3" /><rect x="2" y="8" width="3" height="3" /><rect x="8" y="8" width="3" height="3" /><rect x="5" y="11" width="3" height="3" /><rect x="11" y="11" width="3" height="3" /></g></Svg>,
    <Svg key="10"><path d="M4 1v6M1 4h6M12 2v5M9.500 4.500h5M7 9v6M4 12h6" stroke="#e9dca0" strokeWidth="1.300" /></Svg>,
    <Svg key="11"><path d="M2 5l6 9 6-11" fill="none" stroke="#5d8ad0" strokeWidth="2" /><circle cx="11" cy="4" r="3" fill="#888" stroke="#222" /></Svg>,
  ];
  return (
    <div className="flex-1 min-h-0 flex flex-col bg-[#727272]">
      <div className="relative h-[26px] flex items-center pl-[8px] border-b border-[#5c5c5c] shrink-0">
        <Dropdown w="w-[30px]" icon={<PropsIcon />} />
        <div className={`ml-[8px] h-[19px] ${edge} rounded-[5px] flex overflow-hidden`}>
          {tabs.map((t, i) => (
            <div key={i} className={`w-[20px] flex items-center justify-center ${i === 2 ? "bg-[#5680c2]" : "bg-linear-to-b from-[#5a5a5a] to-[#6c6c6c]"} ${i < 11 ? "border-r border-[#3a3a3a]" : ""}`}>
              {t}
            </div>
          ))}
        </div>
        <Diagonal flip />
      </div>
      <div className="flex-1 min-h-0 flex">
        <div className="relative w-[338px] shrink-0 overflow-hidden">
          <div className="h-[36px] flex items-center pl-[10px] text-[11px] text-[#111]">
            <PinIcon />
            <span className="ml-[7px]"><SceneIcon /></span>
            <span className="ml-[3px] pt-[3px]">Scene</span>
          </div>
          <Rule />
          <PanelHead label="Scene" />
          <PropLabelRow label="Camera:" mt="mt-[9px]">
            <div className={`w-[212px] h-[19px] ${edge} ${fieldBg} rounded-[5px] flex items-center pl-[4px] pr-[1px]`}>
              <CubeIcon orange />
              <Svg className="ml-auto"><path d="M2 14l7-7 2 2-7 6zM9 4l3 3 3-4-2-2z" fill="#ddd" stroke="#111" /></Svg>
            </div>
          </PropLabelRow>
          <PropLabelRow label="Background:" mt="mt-[6px]">
            <div className={`w-[212px] h-[19px] ${edge} ${fieldBg} rounded-[5px] flex items-center pl-[4px]`}><SceneIcon /></div>
          </PropLabelRow>
          <PropLabelRow label="Active Clip:" mt="mt-[6px]">
            <div className={`w-[212px] h-[19px] ${edge} ${fieldBg} rounded-[5px] flex items-center pl-[2px]`}>
              <Svg><rect x="1" y="7" width="10" height="8" fill="#5d8ad0" stroke="#111" /><path d="M1 10h10M4 7v8M7 7v8" stroke="#e4e4e4" /><rect x="7" y="1" width="8" height="6" fill="#4a6fa8" stroke="#111" /></Svg>
            </div>
          </PropLabelRow>
          <div className="mt-[9px]"><Rule /></div>
          <PanelHead label="Units" />
          <div className="mt-[9px] ml-[7px] mr-[6px] h-[20px] flex">
            <div className={`flex-1 ${edge} ${darkBtn} rounded-l-[5px] flex items-center pl-[7px] pr-[5px] text-[11px]`}>
              Unit Presets
              <span className="ml-auto"><Arrows /></span>
            </div>
            <IconBtn className="w-[20px] border-y border-r border-[#2e2e2e]"><CrossIcon /></IconBtn>
            <IconBtn className="w-[20px] border-y border-r border-[#2e2e2e] rounded-r-[5px]"><CrossIcon minus /></IconBtn>
          </div>
          <PropLabelRow label="Length:" w="w-[111px]" mt="mt-[16px]">
            <div className={`w-[206px] h-[20px] ${edge} ${darkBtn} rounded-[5px] flex items-center pl-[7px] pr-[5px] text-[11px]`}>None<span className="ml-auto"><Arrows /></span></div>
          </PropLabelRow>
          <PropLabelRow label="Angle:" w="w-[111px]" mt="mt-[5px]">
            <div className={`w-[206px] h-[20px] ${edge} ${darkBtn} rounded-[5px] flex items-center pl-[7px] pr-[5px] text-[11px]`}>Degrees<span className="ml-auto"><Arrows /></span></div>
          </PropLabelRow>
          <PropLabelRow label="Unit Scale:" w="w-[111px]" mt="mt-[6px]" dim>
            <div className="relative w-[206px] h-[19px] border border-[#505050] rounded-full bg-linear-to-b from-[#7c7c7c] to-[#888] flex items-center justify-end pt-[2px] pr-[15px] text-[11px] text-[#444]">
              1.000000
              <Nudge dim />
            </div>
          </PropLabelRow>
          <div className="mt-[5px] h-[16px] ml-[128px] flex items-center text-[11px] text-[#4a4a4a]">
            <span className="w-[14px] h-[14px] rounded-[3px] border border-[#505050] bg-[#666]" />
            <span className="ml-[7px] pt-[1px]">Separate Units</span>
          </div>
          <div className="mt-[8px]"><Rule /></div>
          <PanelHead label="Keying Sets" />
          <div className="mt-[10px] ml-[7px] mr-[6px] flex">
            <div className={`relative w-[296px] h-[43px] ${edge} bg-[#7e7e7e] rounded-[5px]`}>
              <span className="absolute left-[9px] bottom-[4px]"><ExpandDot /></span>
              <span className="absolute left-[149px] bottom-[6px] w-[14px] h-[4px] border-y border-[#f0f0f0]" />
            </div>
            <div className={`ml-[8px] w-[20px] h-[39px] ${edge} rounded-[5px] flex flex-col overflow-hidden`}>
              <IconBtn className="h-[19px] border-b border-[#2e2e2e]"><CrossIcon /></IconBtn>
              <IconBtn className="flex-1 from-[#8a8a8a] to-[#7a7a7a]"><CrossIcon minus dim /></IconBtn>
            </div>
          </div>
          <div className="mt-[7px]"><Rule /></div>
          <PanelHead label="Color Management" open={false} h="h-[23px]" />
          <Rule />
          <PanelHead label="Audio" open={false} h="h-[23px]" />
          <Rule />
          <PanelHead label="Gravity" h="h-[23px]">
            <span className="w-[14px] h-[14px] rounded-[3px] border border-[#2e2e2e] bg-[#454545] flex items-center justify-center">
              <svg width="12" height="12" viewBox="0 0 12 12"><path d="M2 6l3 3 5-7" fill="none" stroke="#f0f0f0" strokeWidth="1.800" /></svg>
            </span>
          </PanelHead>
          <div className={`mt-[9px] ml-[7px] mr-[6px] h-[19px] ${edge} rounded-full flex overflow-hidden`}>
            <Vec axis="X:" value="0.00" />
            <Vec axis="Y:" value="0.00" />
            <Vec axis="Z:" value="-9.81" last />
          </div>
          <div className="mt-[8px]"><Rule /></div>
          <PanelHead label="Rigid Body World" />
          <Diagonal />
        </div>
        <div className="ml-[3px] mt-[4px] mb-[3px] w-[13px] rounded-full bg-[#595959] border border-[#505050] overflow-hidden">
          <div className="h-[360px] rounded-full bg-linear-to-r from-[#7a7a7a] via-[#949494] to-[#8a8a8a] border border-[#666]" />
        </div>
      </div>
    </div>
  );
}

function TopBar() {
  return (
    <div className="relative h-[26px] bg-[#727272] border-b border-black flex items-start pt-[4px] pl-[8px] shrink-0 overflow-hidden">
      <Dropdown w="w-[29px]" icon={<InfoIcon />} />
      <div className="ml-[13px] flex">
        <Cell label="File" w="w-[38px]" />
        <Cell label="Render" w="w-[55px]" />
        <Cell label="Window" w="w-[60px]" />
        <Cell label="Help" w="w-[36px]" />
      </div>
      <div className={`w-[190px] h-[20px] ${edge} rounded-[5px] flex overflow-hidden shrink-0`}>
        <div className={`w-[31px] ${darkBg} flex items-center justify-center gap-[1px]`}><LayoutIcon /><Arrows /></div>
        <div className={`flex-1 ${fieldBg} border-x border-[#2e2e2e] flex items-center pl-[7px] text-[11px]`}>Default</div>
        <IconBtn className="w-[19px] border-r border-[#2e2e2e]"><CrossIcon /></IconBtn>
        <IconBtn className="w-[19px]"><CrossIcon rotate /></IconBtn>
      </div>
      <div className={`ml-[7px] w-[191px] h-[20px] ${edge} rounded-[5px] flex overflow-hidden shrink-0`}>
        <div className={`w-[32px] ${darkBg} flex items-center justify-center gap-[1px]`}><SceneIcon /><Arrows /></div>
        <div className={`flex-1 ${fieldBg} border-x border-[#2e2e2e] flex items-center pl-[7px] text-[11px]`}>Scene</div>
        <IconBtn className="w-[19px] border-r border-[#2e2e2e]"><CrossIcon /></IconBtn>
        <IconBtn className="w-[19px]"><CrossIcon rotate /></IconBtn>
      </div>
      <div className={`ml-[17px] w-[111px] h-[20px] ${edge} ${darkBtn} rounded-[5px] flex items-center pl-[7px] pr-[5px] text-[11px] shrink-0`}>
        Blender Render
        <span className="ml-auto"><Arrows /></span>
      </div>
      <span className="ml-[18px] mt-[2px] shrink-0"><BlenderLogo /></span>
      <span className="ml-[9px] pt-[4px] text-[11px] text-[#111]">v2.78 | Verts:23,182/23,182 | Edges:70,708/70,708 | Faces:44,113/44,113 | Tris:44,113 | Mem:70.76M | pc</span>
      <Diagonal />
      <Diagonal flip />
    </div>
  );
}

function TitleBar() {
  return (
    <div className="h-[30px] bg-white flex items-center pl-[7px] shrink-0">
      <BlenderLogo size={18} />
      <span className="ml-[5px] text-[12px] tracking-normal text-black font-['Open_Sans',sans-serif]">Blender</span>
      <div className="ml-auto flex items-center">
        <span className="w-[46px] flex justify-center"><span className="w-[10px] h-[1px] bg-black" /></span>
        <span className="w-[46px] flex justify-center"><span className="w-[10px] h-[11px] border border-black" /></span>
        <span className="w-[46px] flex justify-center">
          <svg width="11" height="11" viewBox="0 0 11 11"><path d="M0.500 0.500L10.500 10.500M10.500 0.500L0.500 10.500" stroke="#000" /></svg>
        </span>
      </div>
    </div>
  );
}

function Desktop() {
  return (
    <div className="h-full flex flex-col">
      <div className="h-[721px] flex">
        <div className="w-[8px] flex flex-col">
          <div className="h-[82px] bg-[#e4e4e4]" />
          <div className="flex-1 bg-[#141414]" />
          <div className="h-[28px] bg-[#7878d0]" />
          <div className="h-[67px] bg-[#7b4480]" />
        </div>
        <div className="flex-1 bg-white" />
      </div>
      <div className="h-[17px] flex">
        <div className="w-[1030px] bg-linear-to-b from-[#7b4480] to-[#744a84]" />
        <div className="ml-[14px] w-[312px] bg-white border border-[#b5b5b5] border-t-0" />
      </div>
      <div className="flex-1 bg-[#f0f0f0] flex pt-[5px]">
        <div className="ml-[531px] w-[493px] h-[22px] bg-[#e6e6e6] border border-[#cfcfcf] border-b-0" />
        <div className="ml-[41px] w-[265px] h-[22px] bg-[#e6e6e6] border border-[#cfcfcf] border-b-0" />
      </div>
      <div className="h-[3px] bg-[#1f1f1f]" />
    </div>
  );
}

export default function App() {
  return (
    <div className="relative w-[1366px] h-[768px] overflow-hidden whitespace-nowrap tracking-[-0.25px] font-['DejaVu_Sans','Liberation_Sans',sans-serif]">
      <Desktop />
      <div className="absolute left-[7px] top-0 w-[1352px] h-[721px] border border-[#e0531f] flex flex-col bg-black">
        <TitleBar />
        <TopBar />
        <div className="flex-1 min-h-0 flex">
          <div className="w-[992px] shrink-0 flex flex-col">
            <div className="h-[598px] flex">
              <ImageEditor />
              <div className="w-[1px] bg-black shrink-0" />
              <Viewport3D />
            </div>
            <Timeline />
          </div>
          <div className="w-[2px] bg-black shrink-0" />
          <div className="flex-1 min-w-0 flex flex-col">
            <Outliner />
            <div className="h-[2px] bg-black shrink-0" />
            <Properties />
          </div>
        </div>
      </div>
    </div>
  );
}
